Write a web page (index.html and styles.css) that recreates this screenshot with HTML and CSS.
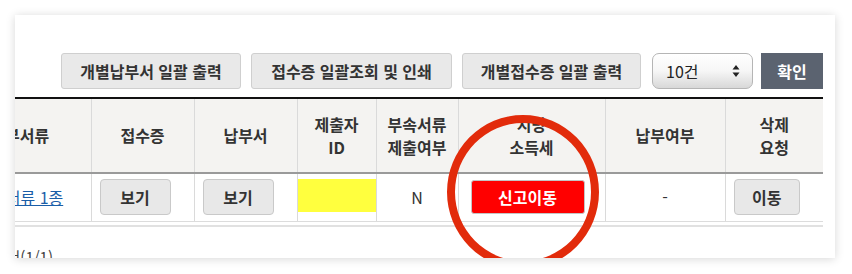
FILE: index.html
```html
<!DOCTYPE html>
<html lang="ko">
<head>
<meta charset="utf-8">
<link rel="stylesheet" href="styles.css">
</head>
<body>
<div class="card">
  <div class="toolbar">
    <button class="btn btn-w1">개별납부서 일괄 출력</button>
    <button class="btn btn-w2">접수증 일괄조회 및 인쇄</button>
    <button class="btn btn-w3">개별접수증 일괄 출력</button>
    <div class="select">
      <span class="select-text">10건</span>
      <svg class="select-arrows" width="8" height="14" viewBox="0 0 8 14"><path d="M4 1 L7.5 5.5 L0.5 5.5 Z M4 13 L7.5 8.5 L0.5 8.5 Z" fill="#222"/></svg>
    </div>
    <button class="btn-dark">확인</button>
  </div>
  <table class="grid">
    <colgroup>
      <col class="c1"><col class="c2"><col class="c3"><col class="c4"><col class="c5"><col class="c6"><col class="c7"><col class="c8">
    </colgroup>
    <thead>
      <tr>
        <th>첨부서류</th>
        <th>접수증</th>
        <th>납부서</th>
        <th>제출자<br>ID</th>
        <th>부속서류<br>제출여부</th>
        <th>지방<br>소득세</th>
        <th>납부여부</th>
        <th>삭제<br>요청</th>
      </tr>
    </thead>
    <tbody>
      <tr>
        <td><a class="link" href="#">첨부서류 1종</a></td>
        <td><button class="btn-sm">보기</button></td>
        <td><button class="btn-sm">보기</button></td>
        <td class="cell-mask"><div class="mask"></div></td>
        <td>N</td>
        <td><button class="btn-red">신고이동</button></td>
        <td>-</td>
        <td><button class="btn-sm btn-sm-narrow">이동</button></td>
      </tr>
    </tbody>
  </table>
  <div class="rule"></div>
  <div class="paging"><span>조회 목록 내역서(1/1)</span></div>
  <div class="circle"></div>
</div>
</body>
</html>
```

FILE: styles.css
```css
* { box-sizing: border-box; }
html, body { margin: 0; padding: 0; background: #ffffff; }
body {
  font-family: "Noto Sans CJK KR", "Noto Sans", sans-serif;
  color: #333;
  width: 852px;
  height: 274px;
  overflow: hidden;
}
.card {
  position: relative;
  margin: 15px 0 0 15px;
  width: 820px;
  height: 243px;
  background: #fff;
  overflow: hidden;
  box-shadow: 0 1px 9px rgba(0,0,0,0.16);
  padding-top: 38px;
}
.toolbar {
  display: flex;
  justify-content: flex-end;
  align-items: center;
  padding-right: 12px;
  height: 36px;
}
.btn {
  height: 36px;
  padding: 0;
  margin-right: 10px;
  background: #e9e9e9;
  border: 1px solid #cfcfcf;
  border-radius: 3px;
  font-family: inherit;
  font-size: 16px;
  font-weight: 700;
  color: #333;
}
.btn-w1 { width: 180px; }
.btn-w2 { width: 201px; }
.btn-w3 { width: 179px; margin-right: 11px; }
.select {
  width: 101px;
  height: 36px;
  margin-right: 8px;
  display: flex;
  align-items: center;
  justify-content: space-between;
  padding: 0 12px 0 13px;
  border: 1px solid #b5b5b5;
  border-radius: 7px;
  background: linear-gradient(#ffffff 0%, #f6f6f6 50%, #d8d8d8 100%);
  box-shadow: inset 0 1px 0 #fff;
}
.select-text { font-size: 16px; color: #222; }
.select-arrows { display: block; }
.btn-dark {
  width: 62px;
  height: 36px;
  padding: 0;
  border: 0;
  background: #5b6370;
  color: #fff;
  font-family: inherit;
  font-size: 16px;
  font-weight: 700;
}
.grid {
  margin-top: 8px;
  margin-left: -66px;
  width: 874px;
  border-collapse: collapse;
  table-layout: fixed;
  border-top: 2px solid #111;
}
.c1 { width: 142px; }
.c2 { width: 103px; }
.c3 { width: 103px; }
.c4 { width: 79px; }
.c5 { width: 82px; }
.c6 { width: 147px; }
.c7 { width: 120px; }
.c8 { width: 98px; }
.grid th, .grid td {
  border-left: 1px solid #dadada;
  text-align: center;
  padding: 0;
}
.grid th:first-child, .grid td:first-child { border-left: 0; }
.grid th {
  height: 75px;
  background: #f4f3f1;
  border-bottom: 2px solid #9a9a9a;
  font-size: 16px;
  font-weight: 700;
  line-height: 23px;
  color: #333;
}
.grid td {
  height: 48px;
  border-bottom: 1px solid #dcdcdc;
  font-size: 16px;
  color: #333;
}
.link { color: #1a5ea8; text-decoration: underline; }
.btn-sm {
  width: 71px;
  height: 36px;
  margin-right: 15px;
  padding: 0;
  background: #e8e8e8;
  border: 1px solid #c9c9c9;
  border-radius: 4px;
  font-family: inherit;
  font-size: 16px;
  font-weight: 700;
  color: #333;
  vertical-align: middle;
}
.btn-sm-narrow { width: 66px; }
.cell-mask { vertical-align: top; }
.mask {
  height: 33px;
  margin-top: 5px;
  background: #ffff3e;
}
.btn-red {
  width: 114px;
  height: 34px;
  margin-right: 8px;
  padding: 0;
  background: #ff0000;
  border: 1px solid #c4c4c4;
  border-radius: 3px;
  font-family: inherit;
  font-size: 16px;
  font-weight: 700;
  color: #fff;
  vertical-align: middle;
}
.rule {
  margin-top: 3px;
  margin-left: -66px;
  width: 874px;
  border-top: 2px solid #e1e1e1;
}
.paging {
  margin-top: 20px;
  margin-left: -200px;
  width: 238px;
  text-align: right;
  white-space: nowrap;
  font-size: 15px;
  line-height: 20px;
  color: #444;
}
.circle {
  position: absolute;
  left: 432px;
  top: 100px;
  width: 152px;
  height: 154px;
  border: 8px solid #e22b0b;
  border-radius: 50%;
}
```
